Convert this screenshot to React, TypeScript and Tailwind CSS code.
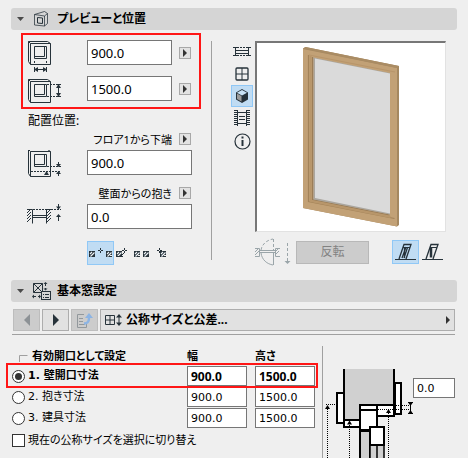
import type { ReactNode } from 'react'

const INK = '#26323a'
const FAINT = '#9aa5a9'

function SectionHeader({ title, icon }: { title: string; icon: ReactNode }) {
  return (
    <button
      type="button"
      className="flex h-[22px] w-full items-center rounded-[3px] bg-[#d5d5d5] text-left text-[12px] leading-[22px] font-bold"
    >
      <svg width="20" height="22" className="shrink-0">
        <path d="M6 9h7l-3.500 4z" fill="#4a4a4a" />
      </svg>
      <span className="w-[26px] shrink-0">{icon}</span>
      {title}
    </button>
  )
}

function MoreButton({ label }: { label: string }) {
  return (
    <button
      type="button"
      aria-label={label}
      className="flex h-[12px] w-[12px] shrink-0 items-center justify-center border border-[#a8a8a8] bg-[#e2e2e2]"
    >
      <svg width="10" height="10">
        <path d="M3 1l4 4-4 4z" fill="#333" />
      </svg>
    </button>
  )
}

function Star({ x, y }: { x: number; y: number }) {
  return <path d={`M${x} ${y - 2.5}v2M${x} ${y + 0.5}v2M${x - 2.5} ${y}h2M${x + 0.5} ${y}h2`} stroke={INK} />
}

function Block({ x, y, flip }: { x: number; y: number; flip?: boolean }) {
  return (
    <g>
      <rect x={x} y={y} width="6" height="6" fill={INK} />
      <path d={`M${x + 1} ${y + 3}l2-2M${x + 1.5} ${y + 5.5}l4-4`} stroke="#eef3f6" strokeWidth="1.100" />
      {flip && <path d={`M${x + 4} ${y + 4.5}h2`} stroke="#efefef" />}
    </g>
  )
}

function Hatch({ x, y, h, color }: { x: number; y: number; h: number; color: string }) {
  const lines = []
  for (let i = 4; i <= h; i += 3) lines.push(`M${x} ${y + i}l4-4`)
  return <path d={lines.join('')} stroke={color} fill="none" />
}

function FrameIcon({ y = 0, h = 21 }: { y?: number; h?: number }) {
  return (
    <g fill="none" stroke={INK}>
      <path d={`M3.500 ${y + 3.5}h20v${h}h-20zM3.500 ${y + 3.5}l-2-2h19l3 2M1.500 ${y + 1.5}v${h - 1}l2 3`} />
      <path d={`M7.500 ${y + 6.5}h12v12h-12zM17.500 ${y + 6.5}v10h-10`} />
    </g>
  )
}

function WidthIcon() {
  return (
    <svg width="60" height="36" className="shrink-0">
      <FrameIcon />
      <path d="M7.500 21v2M19.500 21v2M7.500 27v5M19.500 27v5M8 29.500h11" stroke={INK} />
      <path d="M7 29.500l4-2.500v5zM20 29.500l-4-2.500v5z" fill={INK} />
    </svg>
  )
}

function HeightIcon() {
  return (
    <svg width="60" height="36" className="shrink-0">
      <FrameIcon y={2} />
      <path d="M20 8.500h9M20 20.500h9" stroke={INK} strokeDasharray="2 1" />
      <path d="M29 8.500h5M29 20.500h5M31.500 9v11" stroke={INK} />
      <path d="M31.500 8l-2.500 4h5zM31.500 21l-2.500-4h5z" fill={INK} />
    </svg>
  )
}

function SillIcon() {
  return (
    <svg width="60" height="36" className="shrink-0">
      <FrameIcon y={-2} h={25} />
      <path d="M20 16.500h14M4 21.500h30" stroke={INK} strokeDasharray="2 1" />
      <path d="M31.500 12v4M31.500 22v4" stroke={INK} />
      <path d="M31.500 17l-2.500-3h5zM31.500 21l-2.500 3h5zM19.500 21l-2.500 4h5z" fill={INK} />
    </svg>
  )
}

function RevealIcon() {
  return (
    <svg width="60" height="36" className="shrink-0">
      <Hatch x={0} y={5} h={15} color={INK} />
      <Hatch x={20} y={5} h={15} color={INK} />
      <path d="M0 5.500h5.500v14M24.500 5.500h-5v14M5 11.500h14M5 13.500h14" fill="none" stroke={INK} />
      <path d="M6 5.500h28" stroke={INK} strokeDasharray="2 1" />
      <path d="M31.500 0v4M31.500 12v5" stroke={INK} />
      <path d="M31.500 5.500l-2.500-3h5zM31.500 10l-2.500 3h5z" fill={INK} />
    </svg>
  )
}

function DimensionRow({ icon, label, value }: { icon: ReactNode; label: string; value: string }) {
  return (
    <div className="flex h-[36px] items-start">
      {icon}
      <input
        aria-label={label}
        defaultValue={value}
        className="h-[25px] w-[85px] border border-[#767676] bg-white px-[3px] text-[13px] outline-none"
      />
      <span className="mt-[7px] ml-[7px]">
        <MoreButton label={`${label} 詳細`} />
      </span>
    </div>
  )
}

function PlacementRow({ id, icon, label, value }: { id: string; icon: ReactNode; label: string; value: string }) {
  return (
    <div>
      <div className="flex h-[18px] items-start justify-end gap-[7px] pt-px pr-px">
        <label htmlFor={id} className="text-[11px] leading-[13px]">
          {label}
        </label>
        <MoreButton label={`${label} 詳細`} />
      </div>
      <div className="flex h-[36px] items-start">
        {icon}
        <input
          id={id}
          defaultValue={value}
          className="h-[25px] w-[105px] border border-[#767676] bg-white px-[3px] text-[13px] outline-none"
        />
      </div>
    </div>
  )
}

function WindowPreview() {
  return (
    <svg width="100" height="184" viewBox="301 45 100 184" role="img" aria-label="窓のプレビュー">
      <path d="M303 48.500l2.500-1.500L399 66v159l-2 1.500L303 208z" fill="#a58860" />
      <path d="M303 49l94 19v158.500L303 208z" fill="#c2a176" />
      <path d="M303 48.500l2.500-1.500L399 66l-2 2z" fill="#aa8c64" />
      <path d="M308.500 55v146.500l86 17" fill="none" stroke="#a38359" strokeWidth="1.200" />
      <path d="M309 55l86 17" fill="none" stroke="#b8956a" />
      <path d="M310.500 56v145l80 16" fill="none" stroke="#b8966a" strokeWidth="2" />
      <path d="M312.500 57v142.500l77 15.500" fill="none" stroke="#9b7d57" strokeWidth="1.200" />
      <path d="M313.500 57.500L390 73v141.500l-76.500-15z" fill="#aaa69f" />
      <path d="M315 58.500l75 15v140l-75-15.500z" fill="#dadada" />
    </svg>
  )
}

function ViewButton({ label, active, children }: { label: string; active?: boolean; children: ReactNode }) {
  return (
    <button
      type="button"
      aria-label={label}
      aria-pressed={!!active}
      className={`flex h-[22px] w-[22px] items-center justify-center border ${active ? 'border-[#90c8f6] bg-[#c0dcf3]' : 'border-transparent'}`}
    >
      {children}
    </button>
  )
}

function ViewBar() {
  return (
    <div className="mt-px flex w-[22px] shrink-0 flex-col">
      <ViewButton label="平面">
        <svg width="18" height="12" fill="none" stroke={INK} className="shrink-0">
          <path d="M0 1.500h4M14 1.500h4M0 9.500h4M14 9.500h4M2.500 2v8M15.500 2v8M3 4.500h12M3 7.500h12" />
          <path d="M4 1.500h10M4 9.500h10" strokeDasharray="2 1" />
        </svg>
      </ViewButton>
      <ViewButton label="立面">
        <svg width="14" height="14" fill="none" stroke={INK}>
          <rect x="1" y="1" width="12" height="12" rx="1" strokeWidth="1.300" />
          <path d="M7 1v12M1 7h12" />
        </svg>
      </ViewButton>
      <ViewButton label="3D" active>
        <svg width="14" height="16">
          <path d="M7 1l6 3.500v7L7 15l-6-3.500v-7z" fill="#26323a" />
          <path d="M7 2l5 2.800L7 7.500 2 4.800z" fill="#c8e2f5" />
          <path d="M2 5.500l4.500 2.500v5.500L2 11z" fill="#9b9b9b" />
        </svg>
      </ViewButton>
      <ViewButton label="動画">
        <svg width="16" height="16" fill="none" stroke={INK} className="shrink-0">
          <path d="M1.500 0v16M14.500 0v16" strokeWidth="3" strokeDasharray="1 1" />
          <path d="M3.500 0v16M12.500 0v16M4 2.500h8M4 13.500h8M5 6.500h6M5 9.500h6" />
        </svg>
      </ViewButton>
      <button type="button" aria-label="情報" className="flex h-6 w-[22px] items-center justify-center">
        <svg width="17" height="17" fill="none" stroke={INK}>
          <circle cx="8.500" cy="8.500" r="7.500" strokeWidth="1.200" />
          <path d="M8.500 7v6" strokeWidth="2" />
          <path d="M8.500 3.500v2" strokeWidth="2" />
        </svg>
      </button>
    </div>
  )
}

function SlantIcon({ filled }: { filled?: boolean }) {
  return (
    <svg width="23" height="18" fill="none" stroke={INK} className="shrink-0">
      <path d="M1 16.500h21" />
      <path d="M5 16L10 1.500h7L12 16" strokeWidth="1.300" />
      <path d="M9 4.500h7" />
      {filled ? (
        <path d="M8 15l4-11M10.500 5v10M13.500 4.500L10 15" strokeWidth="1.300" />
      ) : (
        <path d="M10 5v9.500" strokeWidth="2.500" />
      )}
    </svg>
  )
}

function PreviewPanel() {
  return (
    <div className="min-w-0 flex-1 pt-px pr-[11px] pl-[2px]">
      <div className="flex h-[191px] items-start justify-center border border-t-2 border-l-2 border-[#e2e2e2] border-t-[#777] border-l-[#777] bg-white pt-[2px]">
        <WindowPreview />
      </div>
      <div className="mt-[8px] flex h-6 items-center">
        <svg width="41" height="28" fill="none" stroke={FAINT} className="shrink-0">
          <Hatch x={0} y={10} h={9} color={FAINT} />
          <Hatch x={20} y={10} h={9} color={FAINT} />
          <path d="M0 10.500h4.500v8H0M25 10.500h-4.500v8H25M5 12.500h16M5 14.500h16M18.500 14v13M6 15c1 7 6 11 12 12" />
          <path d="M18.500 1v11M6 12C7 6 12 2 18 1M32.500 5v18" strokeDasharray="3 2" />
          <path d="M32.500 26l-3-3h6z" fill={FAINT} stroke="none" />
        </svg>
        <button
          type="button"
          disabled
          className="h-[23px] w-[73px] border border-[#b8b8b8] bg-[#cccccc] text-[12px] leading-[20px] text-[#828282]"
        >
          反転
        </button>
        <div className="ml-auto flex">
          <button
            type="button"
            aria-label="傾斜 1"
            aria-pressed="true"
            className="flex h-6 w-[27px] items-center justify-center border border-[#90c8f6] bg-[#c0dcf3]"
          >
            <SlantIcon filled />
          </button>
          <button type="button" aria-label="傾斜 2" className="flex h-6 w-[27px] items-center justify-center">
            <SlantIcon />
          </button>
        </div>
      </div>
    </div>
  )
}

function AnchorBar() {
  return (
    <div className="mt-px ml-[60px] flex h-6">
      <button
        type="button"
        aria-label="基準点 1"
        aria-pressed="true"
        className="flex w-[27px] items-center justify-center border border-[#90c8f6] bg-[#c0dcf3]"
      >
        <svg width="25" height="22" className="shrink-0">
          <Block x={1} y={9} />
          <Star x={12.5} y={8.5} />
          <Block x={18} y={9} flip />
        </svg>
      </button>
      <button type="button" aria-label="基準点 2" className="w-5">
        <svg width="20" height="24">
          <Block x={2} y={10} />
          <path d="M7 15l4-4M3 15.500h6" stroke={INK} />
          <Star x={10.5} y={9.5} />
        </svg>
      </button>
      <button type="button" aria-label="基準点 3" className="w-5">
        <svg width="20" height="24">
          <Block x={0} y={10} flip />
          <Block x={9} y={10} />
        </svg>
      </button>
      <button type="button" aria-label="基準点 4" className="w-5">
        <svg width="20" height="24">
          <Star x={5.5} y={9.5} />
          <Block x={6} y={10} flip />
        </svg>
      </button>
    </div>
  )
}

function PreviewSection() {
  return (
    <section>
      <SectionHeader
        title="プレビューと位置"
        icon={
          <svg width="18" height="18" fill="none" stroke={INK}>
            <path d="M3.500 4.500l10-3 3 2v10l-3 2.500-10-1zM3.500 4.500l10 1.500 3-2.500M13.500 6v10" opacity=".75" />
            <path d="M6.500 7.500l5 .5v5.500l-5-.5z" />
          </svg>
        }
      />
      <div className="mt-[10px] flex">
        <div className="ml-4 w-[165px] shrink-0">
          <div className="relative">
            <DimensionRow icon={<WidthIcon />} label="幅" value="900.0" />
            <DimensionRow icon={<HeightIcon />} label="高さ" value="1500.0" />
            <div className="pointer-events-none absolute -top-[7px] -left-[6px] h-[76px] w-[180px] border-2 border-[#ff1616]" />
          </div>
          <p className="h-5 pl-px text-[12px] leading-[18px]">配置位置:</p>
          <PlacementRow id="sill" icon={<SillIcon />} label="フロア1から下端" value="900.0" />
          <PlacementRow id="reveal" icon={<RevealIcon />} label="壁面からの抱き" value="0.0" />
          <AnchorBar />
        </div>
        <div className="mt-px mr-[19px] mb-[5px] ml-[19px] w-px bg-[#a0a0a0]" />
        <ViewBar />
        <PreviewPanel />
      </div>
    </section>
  )
}

function PageToolbar() {
  return (
    <div className="mt-[7px] mr-[2px] ml-[2px] flex h-[22px] gap-[2px]">
      <button
        type="button"
        aria-label="前へ"
        disabled
        className="flex w-[27px] items-center justify-center border border-[#bdbdbd] bg-[#cccccc]"
      >
        <svg width="8" height="12">
          <path d="M7 0v12L1 6z" fill="#8d9296" />
        </svg>
      </button>
      <button
        type="button"
        aria-label="次へ"
        className="flex w-[27px] items-center justify-center border border-[#adadad] bg-[#e1e1e1]"
      >
        <svg width="8" height="12">
          <path d="M1 0v12l6-6z" fill="#26323a" />
        </svg>
      </button>
      <button
        type="button"
        aria-label="ページへ移動"
        disabled
        className="flex w-[27px] items-center justify-center border border-[#bdbdbd] bg-[#cccccc]"
      >
        <svg width="17" height="17" fill="none" stroke="#92989c">
          <path d="M8 2.500H1.500v13h9V11M3 6.500h4M3 9.500h4M3 12.500h6" />
          <path d="M8 11.500c4 0 5-2 5-6" stroke="#8cb4e4" strokeWidth="2.500" />
          <path d="M9 6l4-5 4 5z" fill="#8cb4e4" stroke="none" />
        </svg>
      </button>
      <button
        type="button"
        className="flex flex-1 items-center border border-[#adadad] bg-[#e1e1e1] pr-[3px] pl-[4px] text-left text-[12px] leading-[20px] font-bold"
      >
        <svg width="21" height="14" fill="none" stroke={INK} className="shrink-0">
          <path d="M.5 2.500h9v9h-9zM5 2.500v9M.5 7h9M14 3v8" />
          <path d="M14 1l-3 3.500h6zM14 13l-3-3.500h6z" fill={INK} stroke="none" />
        </svg>
        <span className="flex-1">公称サイズと公差...</span>
        <svg width="5" height="8">
          <path d="M0 0v8l4-4z" fill="#333" />
        </svg>
      </button>
    </div>
  )
}

const OPTIONS = [
  { id: 'wall', label: '1. 壁開口寸法', width: '900.0', height: '1500.0' },
  { id: 'reveal-size', label: '2. 抱き寸法', width: '900.0', height: '1500.0' },
  { id: 'unit', label: '3. 建具寸法', width: '900.0', height: '1500.0' },
]

function OptionRow({ option, selected }: { option: (typeof OPTIONS)[number]; selected: boolean }) {
  const field = `h-5 w-[60px] border border-[#767676] bg-white px-[3px] outline-none ${
    selected ? 'text-[12px] font-bold' : "font-['DejaVu_Sans',sans-serif] text-[11px]"
  }`
  return (
    <div className="flex h-[21px] items-start">
      <label
        className={`flex h-5 w-[175px] shrink-0 items-center gap-[3px] font-['DejaVu_Sans','Noto_Sans_CJK_JP',sans-serif] text-[11px] leading-5 ${selected ? 'font-bold' : ''}`}
      >
        <input
          type="radio"
          name="opening"
          value={option.id}
          defaultChecked={selected}
          className="flex h-[13px] w-[13px] appearance-none items-center justify-center rounded-full border border-[#333] bg-white before:block before:h-[7px] before:w-[7px] before:rounded-full before:content-[''] checked:before:bg-[#333]"
        />
        {option.label}
      </label>
      <input aria-label={`${option.label} 幅`} defaultValue={option.width} className={field} />
      <input aria-label={`${option.label} 高さ`} defaultValue={option.height} className={`ml-2 ${field}`} />
    </div>
  )
}

function SectionDiagram() {
  return (
    <svg width="88" height="92" viewBox="325 366 88 92" className="mt-5 shrink-0" role="img" aria-label="断面図">
      <path d="M344 369h50v36h-34v15h-16z" fill="#d0d0d0" />
      <g fill="#fff" stroke="#000" strokeWidth="2">
        <rect x="337" y="393" width="7" height="30" />
        <rect x="395" y="383" width="6" height="31" />
        <rect x="344" y="420" width="16" height="7" />
        <rect x="377" y="405" width="17" height="11" />
        <path d="M360 431h10v34h-10z" fill="#d0d0d0" />
        <path d="M370 444h7v20h-7zM377 444h7v20h-7z" fill="#d0d0d0" strokeWidth="1.500" />
        <rect x="360" y="405" width="17" height="25" />
        <path d="M360 410h17" />
        <rect x="370" y="427" width="14" height="18" />
        <path d="M344 369v51M394 369v47" fill="none" />
      </g>
      <g stroke="#000" strokeDasharray="1 1">
        <path d="M326 404.500h10M396 405.500h14M378 409.500h32" />
        <path d="M327.500 407v51M349.500 423v35M388.500 411v47" />
      </g>
      <path d="M410.500 402v12M408 402.500h5M408 413.500h5" stroke="#000" />
      <path
        d="M327.500 405l-2.500 4h5zM349.500 420.500l-2.500 4h5zM388.500 409l-2.500 4h5zM410.500 406l-2-3h4zM410.500 410l-2 3h4z"
        fill="#000"
      />
    </svg>
  )
}

function SettingsSection() {
  return (
    <section className="mt-[15px] flex flex-1 flex-col">
      <SectionHeader
        title="基本窓設定"
        icon={
          <svg width="20" height="20" fill="none" stroke={INK}>
            <path d="M2.500 2.500h9v9h-9zM2.500 2.500l9 9M11.500 2.500l-9 9M14.500 3v2M14.500 7v2M2 15.500h3M7 15.500h2" />
            <path d="M14.500 1l-2 2h4zM14.500 9.500l-2-2h4zM1 15.500l2-2v4zM10 15.500l-2-2v4z" fill={INK} stroke="none" />
            <rect x="10.500" y="10.500" width="9" height="8" fill="#d5d5d5" />
            <path d="M12 13.500h1M14 13.500h4M12 16.500h1M14 16.500h4" />
          </svg>
        }
      />
      <PageToolbar />
      <hr className="mt-[3px] mr-[2px] ml-px h-px border-0 bg-[#a0a0a0]" />
      <div className="mt-[11px] ml-px flex flex-1">
        <form className="relative w-[310px] shrink-0">
          <div className="flex h-5 items-center text-[11px] leading-5 font-bold">
            <svg width="20" height="20" fill="none" stroke="#a0a0a0">
              <path d="M7.500 16v-6.500h8" />
            </svg>
            <span className="w-[155px]">有効開口として設定</span>
            <span className="w-[68px]">幅</span>
            <span>高さ</span>
          </div>
          {OPTIONS.map((option, index) => (
            <OptionRow key={option.id} option={option} selected={index === 0} />
          ))}
          <label className="mt-px flex h-5 items-center gap-[3px] text-[11px] leading-5">
            <input type="checkbox" className="h-[13px] w-[13px] appearance-none border border-[#333] bg-white" />
            現在の公称サイズを選択に切り替え
          </label>
          <div className="pointer-events-none absolute top-[17px] -left-[6px] h-[25px] w-[312px] border-2 border-[#ff1616]" />
        </form>
        <div className="mr-[2px] w-px shrink-0 bg-[#a0a0a0]" />
        <SectionDiagram />
        <input
          aria-label="公差"
          defaultValue="0.0"
          className="mt-8 h-5 w-[42px] border border-[#767676] bg-white px-[3px] font-['DejaVu_Sans',sans-serif] text-[11px] outline-none"
        />
      </div>
    </section>
  )
}

export default function App() {
  return (
    <main className="flex min-h-screen flex-col bg-[#efefef] px-[11px] pt-2 font-['Noto_Sans','Noto_Sans_CJK_JP',sans-serif] text-black [font-feature-settings:'palt']">
      <PreviewSection />
      <SettingsSection />
    </main>
  )
}
